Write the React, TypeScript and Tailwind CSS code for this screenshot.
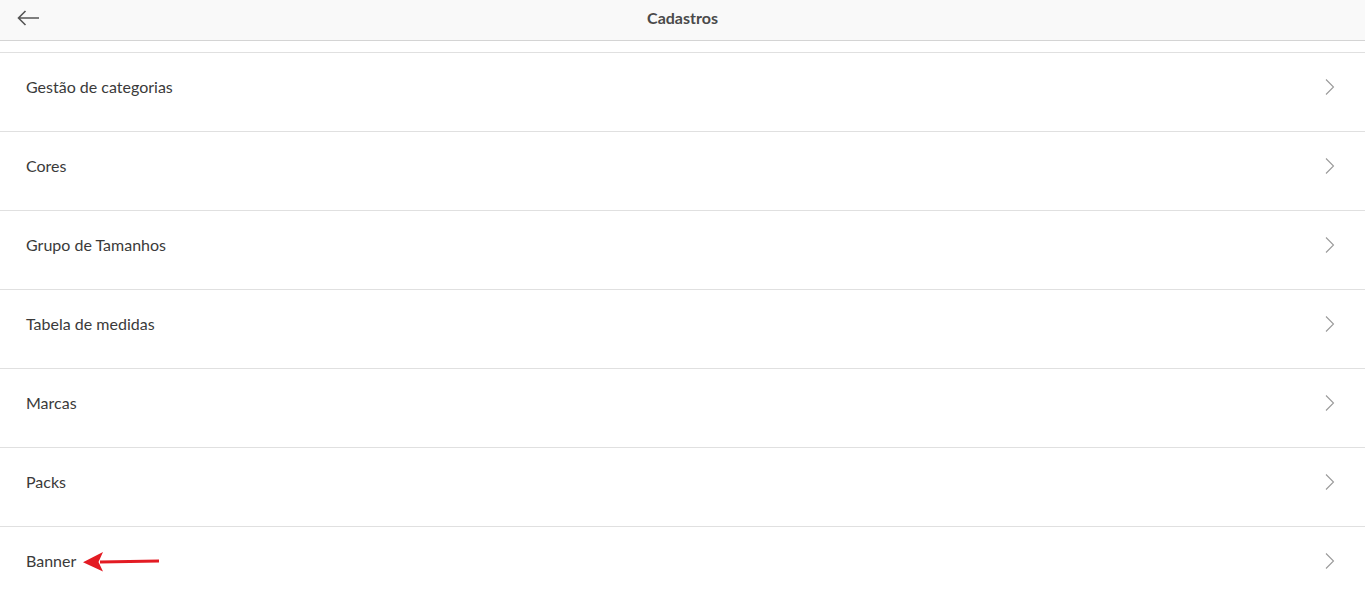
import React from "react";

const items = [
  "Gestão de categorias",
  "Cores",
  "Grupo de Tamanhos",
  "Tabela de medidas",
  "Marcas",
  "Packs",
  "Banner",
];

function Chevron() {
  return (
    <svg width="12" height="18" viewBox="0 0 12 18" fill="none" className="shrink-0">
      <path d="M2 1.5 L9.5 9 L2 16.5" stroke="#9a9a9a" strokeWidth="1.1" />
    </svg>
  );
}

function RedArrow() {
  return (
    <svg width="80" height="22" viewBox="0 0 80 22" className="ml-[6px] mt-[2px]">
      <path d="M18 9.4 L77 8.6 L77 11.4 L18 12.6 Z" fill="#e31b23" />
      <path d="M1 11.2 L21 1 L16.5 11 L21 20.5 Z" fill="#e31b23" />
    </svg>
  );
}

export default function App() {
  return (
    <div
      className="h-[593px] w-full overflow-hidden bg-white"
      style={{ fontFamily: "Lato, 'Liberation Sans', sans-serif" }}
    >
      <header className="relative flex h-[41px] items-center justify-center border-b border-[#d4d4d4] bg-[#f9f9f9] pb-[4px]">
        <button className="absolute left-[16px] top-[9px]" type="button">
          <svg width="24" height="18" viewBox="0 0 24 18" fill="none">
            <path d="M23 9 H2.5 M9.5 2 L2.5 9 L9.5 16" stroke="#555" strokeWidth="1.6" />
          </svg>
        </button>
        <h1 className="text-[16px] font-bold text-[#4a4a4a]">Cadastros</h1>
      </header>

      <div className="mt-[11px] border-t border-[#e0e0e0]">
        {items.map((label) => (
          <div
            key={label}
            className="flex h-[79px] items-center justify-between border-b border-[#e0e0e0] pb-[11px] pl-[26px] pr-[29px]"
          >
            <div className="flex items-center">
              <span className="text-[16px] text-[#3a3a3a]">{label}</span>
              {label === "Banner" && <RedArrow />}
            </div>
            <Chevron />
          </div>
        ))}
      </div>
    </div>
  );
}
